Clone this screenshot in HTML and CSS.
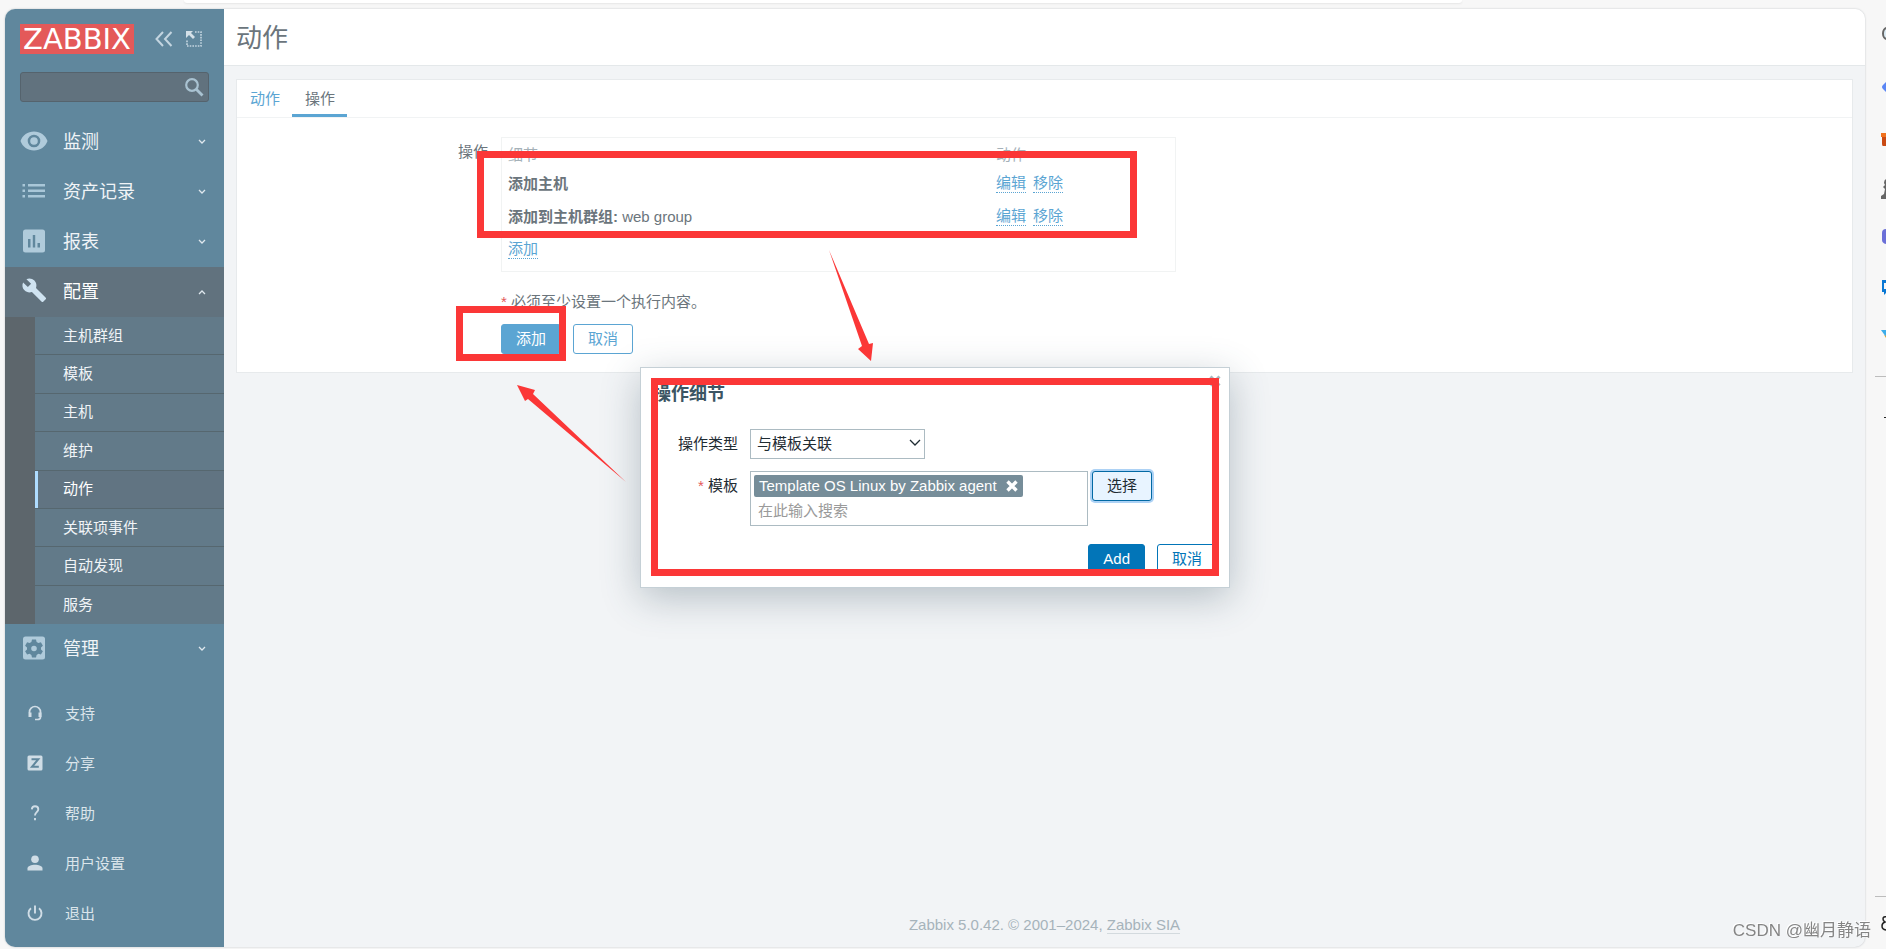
FILE: index.html
```html
<!DOCTYPE html>
<html lang="zh-CN">
<head>
<meta charset="utf-8">
<title>动作</title>
<link rel="stylesheet" href="styles.css">
</head>
<body>
<div class="chrome-top"><div class="address-edge"></div></div>
<div class="workspace">
  <div class="app">
    <aside class="sidebar">
      <div class="brand">
        <a class="logo" href="#">ZABBIX</a>
        <button class="icon-btn" type="button" aria-label="收起">
          <svg width="18" height="16" viewBox="0 0 18 16" fill="none" stroke="#c3d5e0" stroke-width="2"><path d="M8 1 1.500 8 8 15M16.500 1 10 8l6.500 7"/></svg>
        </button>
        <button class="icon-btn" type="button" aria-label="全屏">
          <svg width="16" height="16" viewBox="0 0 16 16" fill="none"><path d="M9 1h6v14H1V9" stroke="#c3d5e0" stroke-width="1.600" stroke-dasharray="1.600 1.100"/><path d="M0 0h7L5 2l4 4-2 2-4-4-3 3z" fill="#d3e0e8"/></svg>
        </button>
      </div>
      <form class="search">
        <input type="text" aria-label="搜索">
        <button type="button" aria-label="搜索">
          <svg width="19" height="19" viewBox="0 0 19 19" fill="none" stroke="#a9c2d1"><circle cx="7" cy="7" r="5.800" stroke-width="2.200"/><path d="m11.500 11.500 6 6" stroke-width="2.800"/></svg>
        </button>
      </form>
      <nav class="menu">
        <a class="menu-item" href="#">
          <svg class="menu-icon" viewBox="0 0 28 28"><path fill="#b0cbdb" fill-rule="evenodd" d="M14 4.500C7.800 4.500 2.500 8.300.5 14c2 5.700 7.300 9.500 13.500 9.500S25.500 19.700 27.500 14C25.500 8.300 20.200 4.500 14 4.500zm0 15.800a6.300 6.300 0 1 1 0-12.600 6.300 6.300 0 0 1 0 12.600zm0-2.500a3.800 3.800 0 1 0 0-7.600 3.800 3.800 0 0 0 0 7.600z"/></svg>
          <span>监测</span>
          <svg class="chev" viewBox="0 0 8 6"><path d="m1 1 3 3 3-3"/></svg>
        </a>
        <a class="menu-item" href="#">
          <svg class="menu-icon" viewBox="0 0 28 28" fill="#a9c7d8"><path d="M2.500 7H5v2.400H2.500zM2.500 12.500H5v2.400H2.500zM2.500 18H5v2.400H2.500zM8 7h17v2.400H8zM8 12.500h17v2.400H8zM8 18h17v2.400H8z"/></svg>
          <span>资产记录</span>
          <svg class="chev" viewBox="0 0 8 6"><path d="m1 1 3 3 3-3"/></svg>
        </a>
        <a class="menu-item" href="#">
          <svg class="menu-icon" viewBox="0 0 28 28"><rect x="3" y="2.500" width="22" height="23" rx="2.500" fill="#b0cbdb"/><path d="M8 12h2.500v8.500H8zM12.800 8h2.400v12.500h-2.400zM17.500 16H20v4.500h-2.500z" fill="#60879d"/></svg>
          <span>报表</span>
          <svg class="chev" viewBox="0 0 8 6"><path d="m1 1 3 3 3-3"/></svg>
        </a>
        <a class="menu-item open" href="#">
          <svg class="menu-icon" viewBox="0 0 24 24" fill="#cfe3f1"><path d="m22.700 19-9.100-9.100c.9-2.300.4-5-1.500-6.900-2-2-5-2.400-7.400-1.300L9 6 6 9 1.600 4.700C.4 7.100.9 10.100 2.900 12.100c1.900 1.900 4.600 2.400 6.900 1.500l9.100 9.100c.4.400 1 .4 1.400 0l2.300-2.300c.5-.4.5-1.100.1-1.400z" transform="translate(1.200 .3) scale(.92)"/></svg>
          <span>配置</span>
          <svg class="chev" viewBox="0 0 8 6"><path d="m1 5 3-3 3 3"/></svg>
        </a>
        <ul class="submenu">
          <li><a href="#">主机群组</a></li>
          <li><a href="#">模板</a></li>
          <li><a href="#">主机</a></li>
          <li><a href="#">维护</a></li>
          <li class="current"><a href="#">动作</a></li>
          <li><a href="#">关联项事件</a></li>
          <li><a href="#">自动发现</a></li>
          <li><a href="#">服务</a></li>
        </ul>
        <a class="menu-item" href="#">
          <svg class="menu-icon" viewBox="0 0 28 28"><rect x="3" y="2.500" width="22" height="23" rx="2.500" fill="#b0cbdb"/><path fill="#60879d" fill-rule="evenodd" d="M12 5.500h4l.6 2.600 1.800 1 2.500-.8 2 3.500-1.900 1.700v1.900l1.900 1.800-2 3.400-2.500-.8-1.800 1.100-.6 2.600h-4l-.6-2.600-1.800-1.100-2.500.8-2-3.400L7 15.400v-1.900l-1.900-1.700 2-3.500 2.500.8 1.800-1zM14 11.700a2.800 2.800 0 1 0 0 5.600 2.800 2.800 0 0 0 0-5.600z"/></svg>
          <span>管理</span>
          <svg class="chev" viewBox="0 0 8 6"><path d="m1 1 3 3 3-3"/></svg>
        </a>
      </nav>
      <nav class="user-menu">
        <a href="#"><svg viewBox="0 0 16 16" fill="none" stroke="#d0dde6" stroke-width="1.700"><path d="M2.500 8V7a5.500 5.500 0 0 1 11 0v5q0 2.500-3 2.500H8"/><path d="M3 7.500v4.500M13 7.500v4.500" stroke-width="3"/></svg><span>支持</span></a>
        <a href="#"><svg viewBox="0 0 16 16"><rect x=".5" y=".5" width="15" height="15" rx="1.500" fill="#d0dde6"/><path d="M4.500 4.200h6.800L5 11.800h6.800" fill="none" stroke="#60879d" stroke-width="2"/></svg><span>分享</span></a>
        <a href="#"><svg viewBox="0 0 16 16" fill="none" stroke="#d0dde6" stroke-width="1.900"><path d="M4.800 4.300C5 2.300 6.200 1.300 8 1.300s3.300 1.100 3.300 3c0 2.800-3.300 3-3.300 6.200M8 13v2.300"/></svg><span>帮助</span></a>
        <a href="#"><svg viewBox="0 0 16 16" fill="#d0dde6"><circle cx="8" cy="4.300" r="3.800"/><path d="M.5 15.500v-2c0-2.500 4-3.700 7.500-3.700s7.500 1.200 7.500 3.700v2z"/></svg><span>用户设置</span></a>
        <a href="#"><svg viewBox="0 0 16 16" fill="none" stroke="#d0dde6" stroke-width="1.900"><path d="M8 .5v8M4 3.300a6.500 6.500 0 1 0 8 0"/></svg><span>退出</span></a>
      </nav>
    </aside>
    <main class="main">
      <header class="page-head"><h1>动作</h1></header>
      <section class="card">
        <div class="tabs">
          <a href="#">动作</a>
          <a class="active" href="#">操作</a>
        </div>
        <form class="form-grid">
          <div class="form-label">操作</div>
          <div class="table-box">
            <table>
              <thead><tr><th class="col-detail">细节</th><th>动作</th></tr></thead>
              <tbody>
                <tr><td><b>添加主机</b></td><td><div class="links"><a href="#">编辑</a><a href="#">移除</a></div></td></tr>
                <tr><td><b>添加到主机群组:</b> web group</td><td><div class="links"><a href="#">编辑</a><a href="#">移除</a></div></td></tr>
                <tr><td colspan="2"><div class="links"><a href="#">添加</a></div></td></tr>
              </tbody>
            </table>
          </div>
          <div class="form-note"><span class="star">*</span> 必须至少设置一个执行内容。</div>
          <div class="form-buttons">
            <button class="btn soft" type="button">添加</button>
            <button class="btn soft-outline" type="button">取消</button>
          </div>
        </form>
      </section>
      <footer class="footer">Zabbix 5.0.42. © 2001–2024, <a href="#">Zabbix SIA</a></footer>
    </main>

    <div class="dialog" role="dialog" aria-labelledby="dlg-title">
      <button class="close" type="button" aria-label="关闭"><svg width="12" height="12" viewBox="0 0 12 12" stroke="#a9b8bf" stroke-width="3"><path d="m1.500 1.500 9 9M10.500 1.500l-9 9"/></svg></button>
      <h2 id="dlg-title">操作细节</h2>
      <form class="dialog-grid">
        <label for="optype">操作类型</label>
        <div class="select-wrap">
          <select id="optype"><option>与模板关联</option></select>
          <svg width="12" height="8" viewBox="0 0 12 8" fill="none" stroke="#1f2c33" stroke-width="1.300"><path d="m1 1 5 5 5-5"/></svg>
        </div>
        <label for="tpl"><span class="star">*</span> 模板</label>
        <div class="picker">
          <div class="multi">
            <span class="tag">Template OS Linux by Zabbix agent
              <button type="button" aria-label="删除"><svg width="12" height="12" viewBox="0 0 12 12" stroke="#fff" stroke-width="3.400"><path d="m1.500 1.500 9 9M10.500 1.500l-9 9"/></svg></button>
            </span>
            <input id="tpl" type="text" placeholder="在此输入搜索">
          </div>
          <button class="btn choose" type="button">选择</button>
        </div>
      </form>
      <div class="dialog-buttons">
        <button class="btn solid" type="button">Add</button>
        <button class="btn outline" type="button">取消</button>
      </div>
      <div class="mark mark-dialog"></div>
    </div>

    <div class="mark mark-rows"></div>
    <div class="mark mark-add"></div>
    <svg class="arrow arrow-down" width="46" height="113" viewBox="0 0 46 113"><path d="M0 0 40 94l4-1-2 18L29 99l4-3z" fill="#fb3737"/></svg>
    <svg class="arrow arrow-up" width="110" height="98" viewBox="0 0 110 98"><path d="m0 0 18 5-2 4 93 88L11 14l-3 2z" fill="#fb3737"/></svg>
  </div>

  <aside class="rail">
    <svg viewBox="0 0 7 50"><path d="M8 16a4 5.500 0 0 0 0 11" fill="#dcecf5" stroke="#666" stroke-width="2"/></svg>
    <svg viewBox="0 0 7 50"><path d="M7 20v10l-3-3q-2-2 0-4z" fill="#5a86f5"/></svg>
    <svg viewBox="0 0 7 50"><path d="M2 21h5v4H2z" fill="#f0711d"/><path d="M3 25h4v9H4q-1 0-1-2z" fill="#c94a13"/></svg>
    <svg viewBox="0 0 7 50"><path d="M7 17q-2 1-2 4l1 2-2 2 2 2-1 5-3 2v3h5z" fill="#666"/></svg>
    <svg viewBox="0 0 7 50"><path d="M7 17q-4 0-4 4v7q0 3 4 4z" fill="#6b70d8"/></svg>
    <svg viewBox="0 0 7 50"><path d="M7 18H3v12h2v3l2-2v-4H5v-6h2z" fill="#0a78d4"/></svg>
    <svg viewBox="0 0 7 50"><path d="M2 18h5v7z" fill="#3cadea"/><path d="m5 23 2 1v2z" fill="#e3a52c"/></svg>
    <hr>
    <svg viewBox="0 0 7 50"><path d="M5 26h2v1H5z" fill="#222"/></svg>
    <hr class="rail-bottom">
    <svg viewBox="0 0 7 50"><path d="M8 20q-4-1-4 2 0 2 2 3-3 1-3 4 0 4 5 4" fill="none" stroke="#222" stroke-width="1.500"/></svg>
  </aside>
</div>
<div class="watermark">CSDN @幽月静语</div>
</body>
</html>
```
FILE: styles.css
```css
* { box-sizing: border-box; }

body {
  margin: 0;
  min-height: 100vh;
  display: flex;
  flex-direction: column;
  background: #f7f7f7;
  color: #6b757c;
  font: 15px/20px "Liberation Sans", "Noto Sans CJK SC", sans-serif;
}

a { color: inherit; text-decoration: none; }
button, input, select { font: inherit; color: inherit; margin: 0; }
button { cursor: pointer; }

.chrome-top { height: 9px; padding: 0 424px 0 184px; }
.address-edge {
  height: 3px;
  background: #fff;
  border-radius: 0 0 12px 12px;
  box-shadow: 0 1px 2px #e6e6e6;
}

.workspace { flex: 1; display: flex; padding: 0 0 2px 5px; }

.app {
  position: relative;
  flex: 1;
  display: flex;
  border-radius: 10px;
  background: #f2f4f6;
  box-shadow: 0 0 2px #b9bdc1;
}

/* Sidebar */
.sidebar {
  width: 219px;
  flex: none;
  display: flex;
  flex-direction: column;
  background: #60879d;
  border-radius: 10px 0 0 10px;
  color: #f0f4f7;
}
.brand { display: flex; align-items: center; padding: 15px 22px 0 15px; }
.logo {
  width: 114px;
  height: 30px;
  background: #e45959;
  color: #fff;
  font: 29px/30px "DejaVu Sans", sans-serif;
  text-align: center;
  margin-right: 21px;
}
.icon-btn { display: flex; padding: 0; border: 0; background: none; margin-right: 13px; }
.icon-btn:last-child { margin: 0; }
.search {
  display: flex;
  margin: 18px 15px 15px;
  height: 30px;
  background: #61727e;
  border: 1px solid #55636d;
  border-radius: 3px;
}
.search input { flex: 1; min-width: 0; border: 0; background: none; outline: 0; }
.search button { display: flex; align-items: center; border: 0; background: none; padding: 0 4px; }

.menu-item {
  display: flex;
  align-items: center;
  height: 50px;
  padding: 0 18px 0 15px;
  font-size: 18px;
}
.menu-item span { flex: 1; }
.menu-icon { width: 28px; height: 28px; margin: 0 15px 2px 0; }
.chev { width: 8px; height: 6px; fill: none; stroke: #dfe8ee; stroke-width: 1.300; }
.open { background: #61727e; color: #fff; }

.submenu {
  list-style: none;
  margin: 0;
  padding: 0;
  display: grid;
  grid-auto-rows: 1fr;
  min-height: 307px;
  border-left: 30px solid #5d666c;
  background: #627a89;
}
.submenu li { display: flex; border-bottom: 1px solid #56676f; }
.submenu li:last-child { border: 0; }
.submenu a { flex: 1; display: flex; align-items: center; padding-left: 28px; }
.submenu .current { background: #617482; }
.submenu .current a { border-left: 3px solid #afdcff; padding-left: 25px; color: #fff; }

.user-menu { margin-top: auto; padding-bottom: 8px; color: #dbe5eb; }
.user-menu a { display: flex; align-items: center; height: 50px; padding-left: 22px; gap: 22px; }
.user-menu svg { width: 16px; height: 16px; margin-bottom: 2px; }

/* Main column */
.main { flex: 1; display: flex; flex-direction: column; }
.page-head {
  height: 57px;
  padding: 1px 12px 0;
  background: #fff;
  border-bottom: 1px solid #e4e8ea;
  border-top-right-radius: 10px;
}
h1 { margin: 0; font-size: 26px; font-weight: 400; line-height: 56px; }

.card { margin: 13px 12px 0; background: #fff; border: 1px solid #e7eaec; }
.tabs { display: flex; border-bottom: 1px solid #f1f3f4; }
.tabs a { padding: 9px 12px 5px 13px; border-bottom: 3px solid transparent; color: #5ba5d3; }
.tabs .active { color: #6b757c; border-color: #5ba5d3; }

.form-grid {
  display: grid;
  grid-template-columns: 251px 1fr;
  column-gap: 13px;
  padding: 19px 0 18px;
}
.form-label { text-align: right; padding-top: 5px; }
.table-box {
  width: 675px;
  max-width: 100%;
  padding: 5px 6px;
  border: 1px solid #f1f3f3;
}
table { width: 100%; border-collapse: collapse; }
th, td { padding: 0; height: 33px; text-align: left; }
th { height: 24px; font-weight: 400; color: #a5b1b8; }
.col-detail { width: 488px; }
.links { display: flex; gap: 7px; color: #5ba5d3; }
.links a { line-height: 18px; border-bottom: 1px dotted #5ba5d3; }
.form-note, .form-buttons { grid-column: 2; }
.form-note { margin-top: 20px; }
.star { color: #e45959; }
.form-buttons { display: flex; gap: 12px; margin-top: 12px; }

.btn {
  height: 30px;
  padding: 0 14px;
  border: 1px solid;
  border-radius: 3px;
  background: #fff;
  line-height: 20px;
}
.soft { background: #5ba5d3; border-color: #5ba5d3; color: #fff; }
.soft-outline { color: #5ba5d3; border-color: #5ba5d3; }

.footer { margin-top: auto; padding-bottom: 12px; text-align: center; color: #a6b3bb; }
.footer a { border-bottom: 1px solid #d3dade; }

/* Dialog */
.dialog {
  position: absolute;
  top: 358px;
  left: 50%;
  width: 590px;
  margin-left: -295px;
  padding: 13px 12px;
  background: #fff;
  border: 1px solid #c5d0d6;
  box-shadow: 0 10px 36px rgba(60, 85, 100, .32);
  color: #1f2c33;
}
.close {
  position: absolute;
  top: 7px;
  right: 8px;
  display: flex;
  padding: 0;
  border: 0;
  background: none;
}
h2 { margin: 0; font-size: 18px; line-height: 26px; color: #3c5563; }
.dialog-grid {
  display: grid;
  grid-template-columns: 85px 1fr;
  gap: 12px;
  margin-top: 22px;
}
.dialog-grid label { text-align: right; padding-top: 5px; }
.select-wrap { position: relative; width: 175px; }
.select-wrap svg { position: absolute; right: 4px; top: 10px; pointer-events: none; }
select {
  appearance: none;
  width: 100%;
  height: 30px;
  padding: 0 24px 0 6px;
  border: 1px solid #acbbc2;
  border-radius: 0;
  background: #fff;
}
.picker { display: flex; align-items: flex-start; gap: 4px; }
.multi { width: 338px; height: 55px; padding: 3px; border: 1px solid #acbbc2; }
.tag {
  display: flex;
  align-items: center;
  gap: 9px;
  width: max-content;
  height: 22px;
  padding: 0 5px;
  border-radius: 2px;
  background: #768d99;
  color: #fff;
}
.tag button { display: flex; padding: 0; border: 0; background: none; }
.multi input { display: block; width: 100%; height: 26px; padding: 0 4px; border: 0; outline: 0; }
.multi input::placeholder { color: #9a9a9a; }
.choose { background: #e8f4ff; border-color: #0269a4; box-shadow: 0 0 0 2px #add2f5; }
.dialog-buttons { display: flex; justify-content: flex-end; gap: 12px; margin-top: 18px; }
.solid { background: #0275b8; border-color: #0275b8; color: #fff; }
.outline { color: #0275b8; border-color: #0275b8; }

/* Annotations */
.mark { position: absolute; border: 7px solid #fb3737; pointer-events: none; }
.mark-rows { left: 472px; top: 142px; width: 660px; height: 87px; }
.mark-add { left: 451px; top: 297px; width: 110px; height: 55px; }
.mark-dialog { left: 10px; top: 10px; right: 10px; bottom: 11px; }
.arrow { position: absolute; pointer-events: none; }
.arrow-down { left: 824px; top: 241px; }
.arrow-up { left: 512px; top: 376px; }

/* Browser side rail */
.rail { width: 21px; flex: none; display: flex; flex-direction: column; align-items: flex-end; padding-top: 3px; }
.rail svg { width: 7px; height: 50px; margin-left: auto; flex: none; }
.rail hr { width: 11px; margin: 14px 0; border: 0; border-top: 1px solid #bdbdbd; flex: none; }
.rail .rail-bottom { margin: auto 0 0; }

.watermark {
  position: fixed;
  right: 15px;
  bottom: 6px;
  font-size: 17px;
  line-height: 24px;
  color: #858585;
  text-shadow: -1px -1px 0 #fff;
}
```
